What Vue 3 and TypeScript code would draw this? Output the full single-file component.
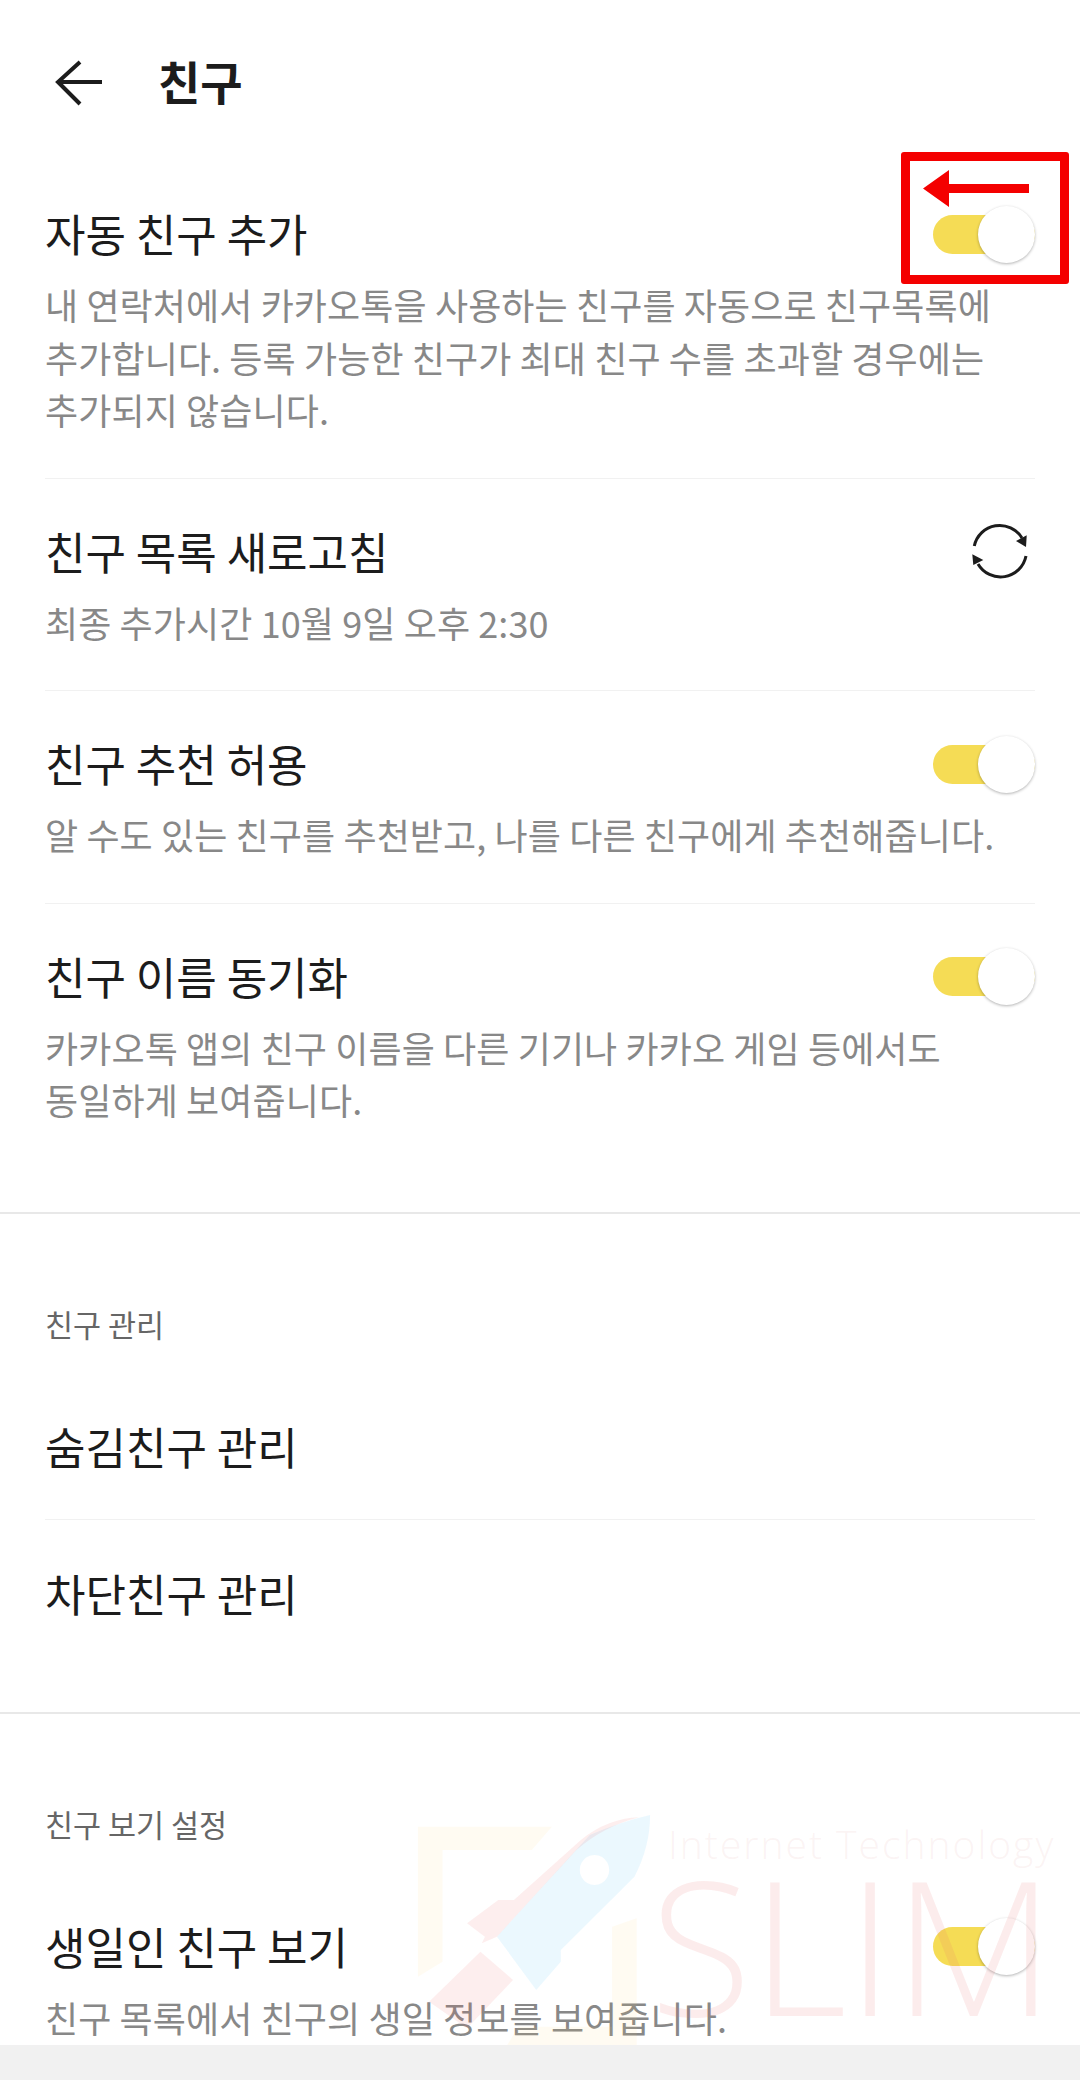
<template>
  <div class="page">
    <div class="content">
      <header class="top">
        <svg class="back" width="50" height="50" viewBox="0 0 50 50" fill="none">
          <path d="M48 25H4.500M26 5L4 25l22 22" stroke="#1c1c1c" stroke-width="4" />
        </svg>
        <h1>친구</h1>
      </header>

      <section class="group first">
        <div v-for="item in mainRows" :key="item.title" class="row">
          <div class="row-head">
            <span class="title">{{ item.title }}</span>
            <span v-if="item.kind === 'toggle'" class="toggle"><i></i></span>
            <svg v-else class="refresh" width="60" height="60" viewBox="0 0 60 60" fill="none">
              <path d="M4.300 25A26 26 0 0 1 52 17" stroke="#1c1c1c" stroke-width="3" />
              <path d="M56.700 14.300L56 26L46 20z" fill="#1c1c1c" />
              <path d="M56 35A26 26 0 0 1 8 43" stroke="#1c1c1c" stroke-width="3" />
              <path d="M2.300 33.300L3.300 44L13.300 39z" fill="#1c1c1c" />
            </svg>
          </div>
          <p class="desc">{{ item.desc }}</p>
        </div>
      </section>

      <section class="group middle">
        <h2>친구 관리</h2>
        <div v-for="name in manageRows" :key="name" class="row plain">
          <span class="title">{{ name }}</span>
        </div>
      </section>

      <section class="group last">
        <h2>친구 보기 설정</h2>
        <div class="row view">
          <div class="row-head">
            <span class="title">생일인 친구 보기</span>
            <span class="toggle"><i></i></span>
          </div>
          <p class="desc">친구 목록에서 친구의 생일 정보를 보여줍니다.</p>
        </div>
      </section>
    </div>
    <div class="bottom"></div>

    <!-- 빨간 표시 -->
    <div class="mark">
      <svg width="150" height="40" viewBox="0 0 150 40">
        <path d="M0 18.500L26 0v14h80v9H26v14z" fill="#f40000" />
      </svg>
    </div>

    <!-- 워터마크 -->
    <svg class="watermark" width="700" height="265" viewBox="0 0 700 265">
      <g transform="scale(0.4464 0.3333)">
        <path d="M85 140H385L340 210H140V545L85 590z" fill="rgba(250,215,110,0.09)" />
        <path d="M520 440L575 415V795H285L310 740H520z" fill="rgba(250,215,110,0.09)" />
        <path d="M605 105Q540 125 470 165L262 470L350 630L405 545V510L570 290Q605 200 605 105zM480 225a33 45 0 1 0 1 0z" fill-rule="evenodd" fill="rgba(120,205,245,0.15)" />
        <path d="M580 112Q510 115 450 180L300 360H265L195 430L235 470L228 490L262 470L440 210Q500 140 580 112z" fill="rgba(240,90,90,0.1)" />
        <path d="M225 515L110 665L195 745L298 600z" fill="rgba(240,90,90,0.1)" />
      </g>
      <text x="288" y="79" class="wm-sub">Internet Technology</text>
      <text x="270" y="236" class="wm-main">SLIM</text>
    </svg>
  </div>
</template>

<script setup lang="ts">
type MainRow = {
  title: string;
  desc: string;
  kind: "toggle" | "refresh";
};

const mainRows: MainRow[] = [
  {
    title: "자동 친구 추가",
    desc: "내 연락처에서 카카오톡을 사용하는 친구를 자동으로 친구목록에\n추가합니다. 등록 가능한 친구가 최대 친구 수를 초과할 경우에는\n추가되지 않습니다.",
    kind: "toggle",
  },
  {
    title: "친구 목록 새로고침",
    desc: "최종 추가시간 10월 9일 오후 2:30",
    kind: "refresh",
  },
  {
    title: "친구 추천 허용",
    desc: "알 수도 있는 친구를 추천받고, 나를 다른 친구에게 추천해줍니다.",
    kind: "toggle",
  },
  {
    title: "친구 이름 동기화",
    desc: "카카오톡 앱의 친구 이름을 다른 기기나 카카오 게임 등에서도\n동일하게 보여줍니다.",
    kind: "toggle",
  },
];

const manageRows = ["숨김친구 관리", "차단친구 관리"];
</script>

<style>
html,
body {
  margin: 0;
  background: #fff;
}
</style>

<style scoped>
.page {
  position: relative;
  width: 1080px;
  height: 2080px;
  overflow: hidden;
  font-family: "Noto Sans CJK KR", "Noto Sans", sans-serif;
  background: #fff;
}

.content {
  height: 2045px;
  overflow: hidden;
}

.bottom {
  height: 35px;
  background: #f1f1f1;
}

.top {
  display: flex;
  align-items: center;
  height: 160px;
  padding-bottom: 1px;
  padding-left: 54px;
}

.back {
  margin-top: 4px;
}

.top h1 {
  margin: 0 0 0 54px;
  font-size: 46px;
  line-height: 60px;
  font-weight: 700;
  color: #1c1c1c;
}

.group {
  padding: 0 45px;
  border-bottom: 2px solid #e8e8e8;
}

.group.first {
  padding-bottom: 44px;
}

.group.middle {
  padding-bottom: 46px;
}

.group.last {
  border-bottom: none;
}

.group h2 {
  margin: 0 0 28px;
  padding-top: 89px;
  font-size: 30.500px;
  line-height: 42px;
  font-weight: 400;
  color: #666;
}

.row {
  padding: 42px 0 42px;
  border-bottom: 1px solid #f1f1f1;
}

.row:last-child {
  border-bottom: none;
}

.row.plain {
  padding: 43px 0;
}

.row.view {
  padding: 43px 0 0;
}

.row-head {
  display: flex;
  align-items: center;
  justify-content: space-between;
  height: 60px;
}

.title {
  font-size: 44px;
  line-height: 60px;
  color: #1c1c1c;
}

.desc {
  margin: 15px 0 0;
  font-size: 36px;
  line-height: 52.5px;
  letter-spacing: 0.1px;
  color: #888;
  white-space: pre-line;
}

.toggle {
  position: relative;
  display: block;
  width: 102px;
  height: 39px;
  margin-top: 2px;
  box-sizing: border-box;
  border-radius: 20px;
  background: #f5dc55;
}

.toggle i {
  position: absolute;
  top: -9px;
  right: 0;
  width: 57px;
  height: 57px;
  border-radius: 50%;
  background: #fff;
  box-shadow: 0 1px 3px rgba(0, 0, 0, 0.3);
}

.refresh {
  margin-right: 5px;
}

.mark {
  position: absolute;
  left: 901px;
  top: 152px;
  width: 150px;
  height: 114px;
  border: 9px solid #f40000;
  border-radius: 3px;
}

.mark svg {
  position: absolute;
  left: 13px;
  top: 9px;
}

.watermark {
  position: absolute;
  left: 380px;
  top: 1780px;
  pointer-events: none;
}

.wm-sub {
  font-family: "Open Sans", sans-serif;
  font-size: 39px;
  font-weight: 300;
  letter-spacing: 2px;
  fill: rgba(225, 170, 170, 0.14);
}

.wm-main {
  font-family: "Open Sans", sans-serif;
  font-size: 186px;
  font-weight: 300;
  fill: rgba(235, 110, 110, 0.13);
}
</style>
